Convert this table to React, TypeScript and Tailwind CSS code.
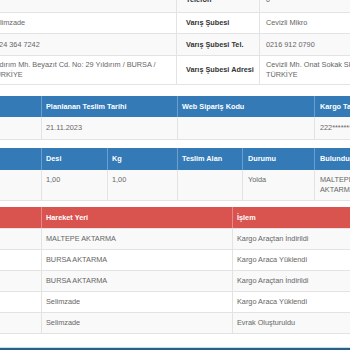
type Row = { cells: string[][]; h: string; bg: string; pad?: string };

const infoRows: Row[] = [
  { cells: [[""], ["Telefon"], ["0"]], h: "h-[21px]", bg: "bg-[#f9f9f9]", pad: "pb-[5px]" },
  { cells: [["Selimzade"], ["Varış Şubesi"], ["Cevizli Mikro"]], h: "h-[21px]", bg: "bg-white" },
  { cells: [["0224 364 7242"], ["Varış Şubesi Tel."], ["0216 912 0790"]], h: "h-[22px]", bg: "bg-[#f9f9f9]" },
  {
    cells: [
      ["Yıldırım Mh. Beyazıt Cd. No: 29 Yıldırım / BURSA /", "TÜRKİYE"],
      ["Varış Şubesi Adresi"],
      ["Cevizli Mh. Onat Sokak Sk. No: 12 / İSTANBUL /", "TÜRKİYE"],
    ],
    h: "h-[29px]",
    bg: "bg-white",
  },
];

const moves = [
  ["MALTEPE AKTARMA", "Kargo Araçtan İndirildi"],
  ["BURSA AKTARMA", "Kargo Araca Yüklendi"],
  ["BURSA AKTARMA", "Kargo Araçtan İndirildi"],
  ["Selimzade", "Kargo Araca Yüklendi"],
  ["Selimzade", "Evrak Oluşturuldu"],
];

function Lines({ lines }: { lines: string[] }) {
  return (
    <>
      {lines.map((l, i) => (
        <div key={i}>{l}</div>
      ))}
    </>
  );
}

export default function App() {
  return (
    <div
      className="w-[350px] h-[350px] overflow-hidden bg-white text-[7.3px] leading-[10px] text-[#666]"
      style={{ fontFamily: '"Liberation Sans", Arial, sans-serif' }}
    >
      <div className="-ml-[14px] -mt-[9px] w-[460px]">
        {/* sender / receiver info */}
        <div className="border-b border-[#e3e3e3]">
          {infoRows.map((r, i) => (
            <div key={i} className={`grid grid-cols-[191px_83px_186px] border-t border-[#e3e3e3] ${r.bg} ${r.h}`}>
              <div className={`px-[5px] flex flex-col justify-center border-r border-[#e3e3e3] ${r.pad ?? ""}`}>
                <Lines lines={r.cells[0]} />
              </div>
              <div
                className={`px-[9px] flex flex-col justify-center whitespace-nowrap border-r border-[#e3e3e3] font-bold text-[#333] ${r.pad ?? ""}`}
              >
                <Lines lines={r.cells[1]} />
              </div>
              <div className={`px-[6px] flex flex-col justify-center whitespace-nowrap ${r.pad ?? ""}`}>
                <Lines lines={r.cells[2]} />
              </div>
            </div>
          ))}
        </div>

        {/* delivery */}
        <div className="mt-[11px] border-b border-[#e3e3e3]">
          <div className="grid grid-cols-[56px_136px_137px_131px] h-[21px] bg-[#337ab7] text-white font-bold">
            <div className="border-r border-[#6a9fd0]" />
            <div className="px-[4px] flex items-center border-r border-[#6a9fd0]">Planlanan Teslim Tarihi</div>
            <div className="px-[4px] flex items-center border-r border-[#6a9fd0]">Web Sipariş Kodu</div>
            <div className="px-[5px] flex items-center">Kargo Takip No</div>
          </div>
          <div className="grid grid-cols-[56px_136px_137px_131px] h-[22px] bg-[#f9f9f9]">
            <div className="border-r border-[#e3e3e3]" />
            <div className="px-[4px] flex items-center border-r border-[#e3e3e3]">21.11.2023</div>
            <div className="border-r border-[#e3e3e3]" />
            <div className="px-[5px] flex items-center">222*******</div>
          </div>
        </div>

        {/* package */}
        <div className="mt-[8px] border-b border-[#e3e3e3]">
          <div className="grid grid-cols-[56px_66px_70px_65px_72px_131px] h-[22px] bg-[#337ab7] text-white font-bold">
            <div className="border-r border-[#6a9fd0]" />
            <div className="px-[4px] flex items-center border-r border-[#6a9fd0]">Desi</div>
            <div className="px-[4px] flex items-center border-r border-[#6a9fd0]">Kg</div>
            <div className="px-[4px] flex items-center border-r border-[#6a9fd0]">Teslim Alan</div>
            <div className="px-[5px] flex items-center border-r border-[#6a9fd0]">Durumu</div>
            <div className="px-[5px] flex items-center">Bulunduğu Yer</div>
          </div>
          <div className="grid grid-cols-[56px_66px_70px_65px_72px_131px] h-[30px] bg-[#f9f9f9]">
            <div className="border-r border-[#e3e3e3]" />
            <div className="px-[4px] pt-[5px] border-r border-[#e3e3e3]">1,00</div>
            <div className="px-[4px] pt-[5px] border-r border-[#e3e3e3]">1,00</div>
            <div className="border-r border-[#e3e3e3]" />
            <div className="px-[5px] pt-[5px] border-r border-[#e3e3e3]">Yolda</div>
            <div className="px-[5px] pt-[5px] w-[40px]">MALTEPE AKTARMA</div>
          </div>
        </div>

        {/* movements */}
        <div className="mt-[6px] border-b border-[#e3e3e3]">
          <div className="grid grid-cols-[56px_191px_213px] h-[21px] bg-[#d9534f] text-white font-bold">
            <div className="border-r border-[#e58a87]" />
            <div className="px-[4px] flex items-center border-r border-[#e58a87]">Hareket Yeri</div>
            <div className="px-[4px] flex items-center">İşlem</div>
          </div>
          {moves.map((m, i) => (
            <div
              key={i}
              className={`grid grid-cols-[56px_191px_213px] h-[21px] border-t border-[#e3e3e3] ${
                i % 2 === 0 ? "bg-[#f9f9f9]" : "bg-white"
              }`}
            >
              <div className="border-r border-[#e3e3e3]" />
              <div className="px-[4px] flex items-center border-r border-[#e3e3e3]">{m[0]}</div>
              <div className="px-[4px] flex items-center">{m[1]}</div>
            </div>
          ))}
        </div>

        <div className="mt-[13px] h-[1px] bg-[#bfe3ef]" />
        <div className="h-[3px] bg-[#2c5f88]" />
      </div>
    </div>
  );
}
